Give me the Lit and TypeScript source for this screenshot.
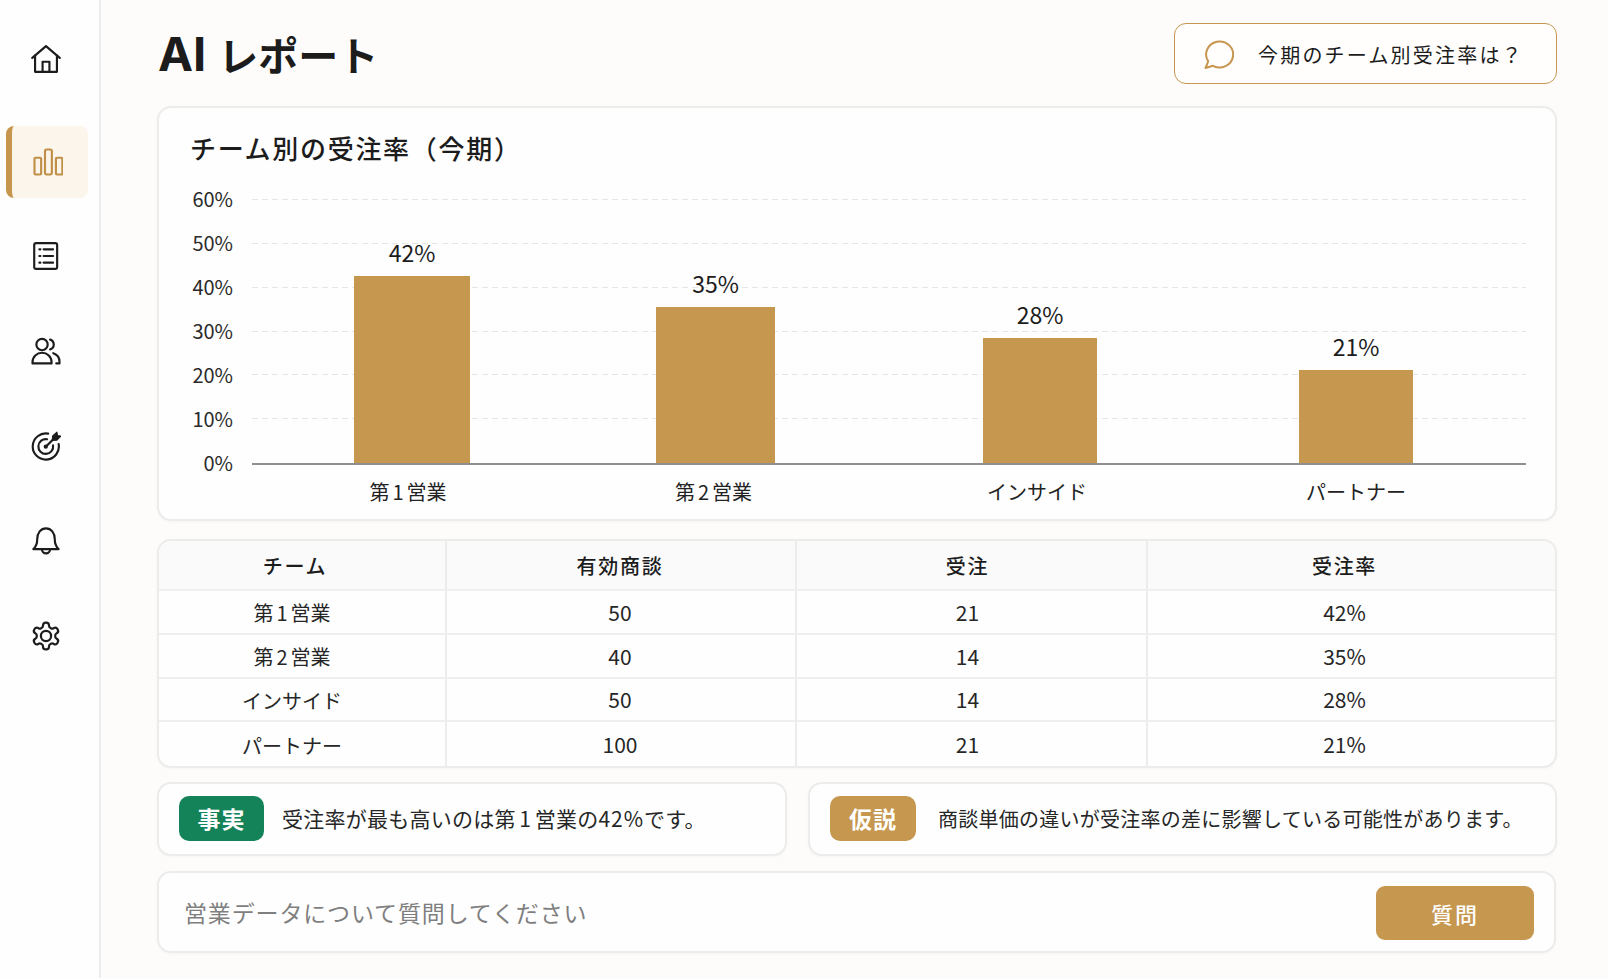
import { LitElement, html, css, svg } from 'lit';
import { customElement } from 'lit/decorators.js';

const navIcons = [
  svg`<path d="M1.200 13 14 2l12.800 11"/><path d="M3.800 10.800V26h20.400V10.800"/><path d="M10.800 26v-9.400h6.400V26"/>`,
  svg`<rect x="1.400" y="10" width="6.200" height="15.700" rx="1"/><rect x="11.200" y="2.300" width="6.400" height="23.400" rx="1.600"/><rect x="21.400" y="10" width="6" height="15.700" rx="1"/>`,
  svg`<rect x="3" y="2" width="21.400" height="24" rx="1.800"/><path d="M7.800 7.800h1M7.800 14h1M7.800 20.200h1M11.800 7.800h8.800M11.800 14h8.800M11.800 20.200h8.800"/>`,
  svg`<circle cx="10.300" cy="8" r="5.300"/><path d="M1.400 25.600v-1.200c0-5 4-8.800 8.900-8.800s8.900 3.800 8.900 8.800v1.200z"/><path d="M17.800 3.400a4.800 4.800 0 0 1 0 9.200"/><path d="M20.800 16c3.600 1.200 5.800 4.400 5.800 8v1.600h-3"/>`,
  svg`<path d="M25.800 12.200A12.200 12.200 0 1 1 16 2.500"/><path d="M20.600 13.400A6.900 6.900 0 1 1 15 7.700"/><path d="M13.800 14.600 23.600 4.800"/><path d="M19.800 8.800 20.200 4.600 24.200 1l.6 3.200 3 .6-3.600 3.800z" fill="currentColor" stroke-width="1"/><circle cx="13.800" cy="14.600" r="1" fill="currentColor"/>`,
  svg`<path d="M2.200 21.600c2.800-2.500 3.600-5 3.600-9.200 0-6 3.400-10.200 8.200-10.200s8.200 4.200 8.200 10.200c0 4.200.8 6.700 3.600 9.200z"/><path d="M10.200 21.800a3.800 3.800 0 0 0 7.600 0"/>`,
  svg`<g transform="translate(-1 -1) scale(1.250)" stroke-width="1.650"><path d="M12.220 2h-.44a2 2 0 0 0-2 2v.18a2 2 0 0 1-1 1.730l-.43.250a2 2 0 0 1-2 0l-.15-.08a2 2 0 0 0-2.730.730l-.22.380a2 2 0 0 0 .730 2.730l.15.100a2 2 0 0 1 1 1.720v.510a2 2 0 0 1-1 1.740l-.15.090a2 2 0 0 0-.730 2.730l.22.380a2 2 0 0 0 2.730.730l.15-.08a2 2 0 0 1 2 0l.43.250a2 2 0 0 1 1 1.730V20a2 2 0 0 0 2 2h.44a2 2 0 0 0 2-2v-.18a2 2 0 0 1 1-1.730l.43-.25a2 2 0 0 1 2 0l.15.080a2 2 0 0 0 2.730-.730l.22-.390a2 2 0 0 0-.730-2.730l-.15-.08a2 2 0 0 1-1-1.740v-.5a2 2 0 0 1 1-1.740l.15-.09a2 2 0 0 0 .730-2.730l-.22-.38a2 2 0 0 0-2.730-.730l-.15.080a2 2 0 0 1-2 0l-.43-.25a2 2 0 0 1-1-1.730V4a2 2 0 0 0-2-2z"/><circle cx="12" cy="12" r="3.800"/></g>`,
];

const team = (name: string) =>
  name.includes('1') || name.includes('2')
    ? html`第<span class="digit">${name[1]}</span>営業`
    : name;

const bars = [
  { label: '第1営業', value: 42, gap: 102, width: 116, shift: -4 },
  { label: '第2営業', value: 35, gap: 186, width: 119, shift: -2 },
  { label: 'インサイド', value: 28, gap: 208, width: 114, shift: -3 },
  { label: 'パートナー', value: 21, gap: 202, width: 114, shift: 0 },
];

const ticks = [60, 50, 40, 30, 20, 10, 0];

const rows = [
  ['第1営業', '50', '21', '42%'],
  ['第2営業', '40', '14', '35%'],
  ['インサイド', '50', '14', '28%'],
  ['パートナー', '100', '21', '21%'],
];

@customElement('app-root')
export class AppRoot extends LitElement {
  static styles = css`
    :host {
      display: flex;
      width: 1608px;
      height: 978px;
      overflow: hidden;
      background: #fdfcfa;
      color: #1c1c1c;
      font-family: "Noto Sans CJK JP", "Noto Sans", sans-serif;
    }

    .sidebar {
      box-sizing: border-box;
      width: 101px;
      flex: none;
      padding-top: 23px;
      background: #fefefe;
      border-right: 2px solid #ececec;
      display: flex;
      flex-direction: column;
    }

    .nav-item {
      height: 72px;
      margin: 0 0 23px 6px;
      width: 83px;
      box-sizing: border-box;
      display: flex;
      align-items: center;
      justify-content: center;
      color: #1c1c1c;
      padding-right: 3px;
    }

    .nav-item:first-child {
      margin-bottom: 31px;
    }

    .nav-item svg {
      width: 30px;
      height: 30px;
      fill: none;
      stroke: currentColor;
      stroke-width: 2;
      stroke-linecap: round;
      stroke-linejoin: round;
    }

    .nav-item.active {
      width: 82px;
      margin-bottom: 22px;
      background: #fbf5ec;
      border-left: 6px solid #c6964e;
      border-radius: 8px;
      color: #c08f48;
      padding-right: 4px;
    }

    .main {
      flex: 1;
      min-width: 0;
      box-sizing: border-box;
      padding: 23px 51px 0 56px;
      display: flex;
      flex-direction: column;
    }

    .header {
      display: flex;
      justify-content: space-between;
      align-items: center;
      height: 61px;
      margin-bottom: 22px;
    }

    h1 {
      margin: 0 0 0 1px;
      font-size: 40px;
      font-weight: 700;
      line-height: 1;
      display: flex;
      align-items: center;
      gap: 12px;
    }

    h1 .latin {
      font-family: Inter, sans-serif;
      font-size: 47px;
    }

    .prompt {
      box-sizing: border-box;
      width: 383px;
      height: 61px;
      border: 1.5px solid #c6964e;
      border-radius: 12px;
      background: #fffefd;
      display: flex;
      align-items: center;
      padding-left: 27px;
      gap: 24px;
      font-size: 20px;
      letter-spacing: 2.2px;
    }

    .prompt span {
      padding-top: 2px;
    }

    .prompt svg {
      width: 32px;
      height: 32px;
      fill: none;
      stroke: #c6964e;
      stroke-width: 2;
      stroke-linejoin: round;
      flex: none;
    }

    .card {
      box-sizing: border-box;
      background: #fefefe;
      border: 2px solid #ececeb;
      border-radius: 14px;
      box-shadow: 0 1px 3px rgba(0, 0, 0, 0.03);
    }

    .chart {
      height: 415px;
      padding: 22px 29px 0 31px;
      margin-bottom: 18px;
    }

    h2 {
      margin: 0 0 32px;
      font-size: 26px;
      line-height: 36px;
      font-weight: 500;
      letter-spacing: 1.7px;
    }

    .plot-area {
      display: flex;
    }

    .y-axis {
      box-sizing: border-box;
      width: 62px;
      flex: none;
      height: 264px;
      margin-top: 1px;
      padding-right: 19px;
      text-align: right;
      display: flex;
      flex-direction: column;
      justify-content: space-between;
      font-size: 20px;
      line-height: 0;
      color: #2a2a2a;
    }

    .y-axis span {
      height: 0;
      display: block;
    }

    .plot {
      position: relative;
      flex: 1;
      height: 265px;
      display: flex;
      align-items: flex-end;
      border-bottom: 2px solid #8f8f8f;
    }

    .grid-line {
      position: absolute;
      left: 0;
      right: 0;
      height: 1px;
      background: repeating-linear-gradient(90deg, #e6e6e6 0 6px, transparent 6px 10px);
    }

    .bar {
      position: relative;
      background: #c6974f;
      flex: none;
    }

    .bar-value {
      position: absolute;
      left: -20px;
      right: -20px;
      bottom: 100%;
      margin-bottom: 10px;
      text-align: center;
      font-size: 23px;
      line-height: 28px;
      color: #1c1c1c;
    }

    .x-axis {
      display: flex;
      margin-left: 62px;
      margin-top: 13px;
      font-size: 20px;
      line-height: 28px;
      color: #222;
    }

    .x-label {
      flex: none;
      text-align: center;
      white-space: nowrap;
    }

    .digit {
      margin: 0 3px;
    }

    .table {
      height: 229px;
      margin-bottom: 14px;
      overflow: hidden;
      display: grid;
      grid-template-columns: 288px 350px 351px 1fr;
      grid-template-rows: 50px repeat(4, 1fr);
    }

    .cell {
      display: flex;
      align-items: center;
      justify-content: center;
      font-size: 20px;
      padding-top: 2px;
      border-bottom: 2px solid #efefef;
      border-right: 2px solid #ececec;
      color: #262626;
    }

    .cell.numeric {
      font-size: 21px;
      padding-top: 0;
    }

    .cell.head {
      padding-top: 0;
      background: #fafafa;
      font-weight: 500;
      letter-spacing: 1.7px;
      color: #1c1c1c;
    }

    .cell.c0 {
      padding-right: 20px;
    }

    .cell.head.c0 {
      padding-right: 14px;
    }

    .cell.c1 {
      padding-right: 2px;
    }

    .cell.c2 {
      padding-right: 8px;
    }

    .cell.c3 {
      padding-right: 14px;
      border-right: none;
    }

    .cell.last-row {
      border-bottom: none;
    }

    .notes {
      display: flex;
      gap: 21px;
      margin-bottom: 15px;
    }

    .note {
      box-sizing: border-box;
      height: 74px;
      display: flex;
      align-items: center;
      padding-left: 20px;
      padding-bottom: 2px;
      color: #262626;
    }

    .note.fact {
      width: 630px;
      gap: 18px;
      font-size: 21px;
      letter-spacing: 0.25px;
    }

    .note.hypo {
      flex: 1;
      gap: 22px;
      font-size: 20px;
      letter-spacing: 0.25px;
    }

    .note .digit {
      margin: 0 3.5px;
    }

    .note .pct {
      letter-spacing: 1px;
    }

    .tag {
      width: 86px;
      height: 45px;
      flex: none;
      border-radius: 10px;
      display: flex;
      align-items: center;
      justify-content: center;
      color: #fff;
      font-size: 23px;
      font-weight: 700;
      letter-spacing: 1px;
    }

    .tag.green {
      background: #14835a;
      width: 85px;
    }

    .tag.gold {
      background: #c6974f;
    }

    .ask {
      box-sizing: border-box;
      height: 82px;
      margin-right: 1px;
      display: flex;
      align-items: center;
      justify-content: space-between;
      padding: 0 20px 0 25px;
    }

    .placeholder {
      font-size: 23px;
      color: #7f7f7f;
      letter-spacing: 0.85px;
    }

    .ask-button {
      width: 158px;
      height: 54px;
      margin-top: 2px;
      border: none;
      border-radius: 9px;
      background: #c6974f;
      color: #fff;
      font-family: inherit;
      font-size: 22px;
      font-weight: 500;
      letter-spacing: 2px;
    }
  `;

  render() {
    const gridScale = 263 / 60;
    const barScale = 4.45;
    return html`
      <nav class="sidebar">
        ${navIcons.map(
          (icon, i) => html`
            <div class="nav-item ${i === 1 ? 'active' : ''}">
              <svg viewBox="0 0 28 28">${icon}</svg>
            </div>
          `,
        )}
      </nav>
      <main class="main">
        <header class="header">
          <h1><span class="latin">AI</span><span>レポート</span></h1>
          <div class="prompt">
            <svg viewBox="0 0 32 32">
              <path d="M3.500 30 6.200 23.400A13.500 13 0 1 1 11 27.800z" />
            </svg>
            <span>今期のチーム別受注率は？</span>
          </div>
        </header>

        <section class="card chart">
          <h2>チーム別の受注率（今期）</h2>
          <div class="plot-area">
            <div class="y-axis">${ticks.map((t) => html`<span>${t}%</span>`)}</div>
            <div class="plot">
              ${ticks.slice(0, -1).map(
                (t) => html`<div class="grid-line" style="bottom:${t * gridScale}px"></div>`,
              )}
              ${bars.map(
                (b) => html`
                  <div
                    class="bar"
                    style="width:${b.width}px;height:${b.value * barScale}px;margin-left:${b.gap}px"
                  >
                    <span class="bar-value">${b.value}%</span>
                  </div>
                `,
              )}
            </div>
          </div>
          <div class="x-axis">
            ${bars.map(
              (b) => html`<div
                class="x-label"
                style="width:${b.width}px;margin-left:${b.gap}px;transform:translateX(${b.shift}px)"
              >
                ${team(b.label)}
              </div>`,
            )}
          </div>
        </section>

        <section class="card table">
          ${['チーム', '有効商談', '受注', '受注率'].map(
            (h, i) => html`<div class="cell head c${i}">${h}</div>`,
          )}
          ${rows.map((row, r) =>
            row.map(
              (c, i) =>
                html`<div class="cell c${i} ${i > 0 ? 'numeric' : ''} ${r === 3 ? 'last-row' : ''}">
                  ${i === 0 ? team(c) : c}
                </div>`,
            ),
          )}
        </section>

        <section class="notes">
          <div class="card note fact">
            <span class="tag green">事実</span>
            <span>受注率が最も高いのは第<span class="digit">1</span>営業の<span class="pct">42%</span>です。</span>
          </div>
          <div class="card note hypo">
            <span class="tag gold">仮説</span>
            <span>商談単価の違いが受注率の差に影響している可能性があります。</span>
          </div>
        </section>

        <section class="card ask">
          <span class="placeholder">営業データについて質問してください</span>
          <button class="ask-button">質問</button>
        </section>
      </main>
    `;
  }
}
